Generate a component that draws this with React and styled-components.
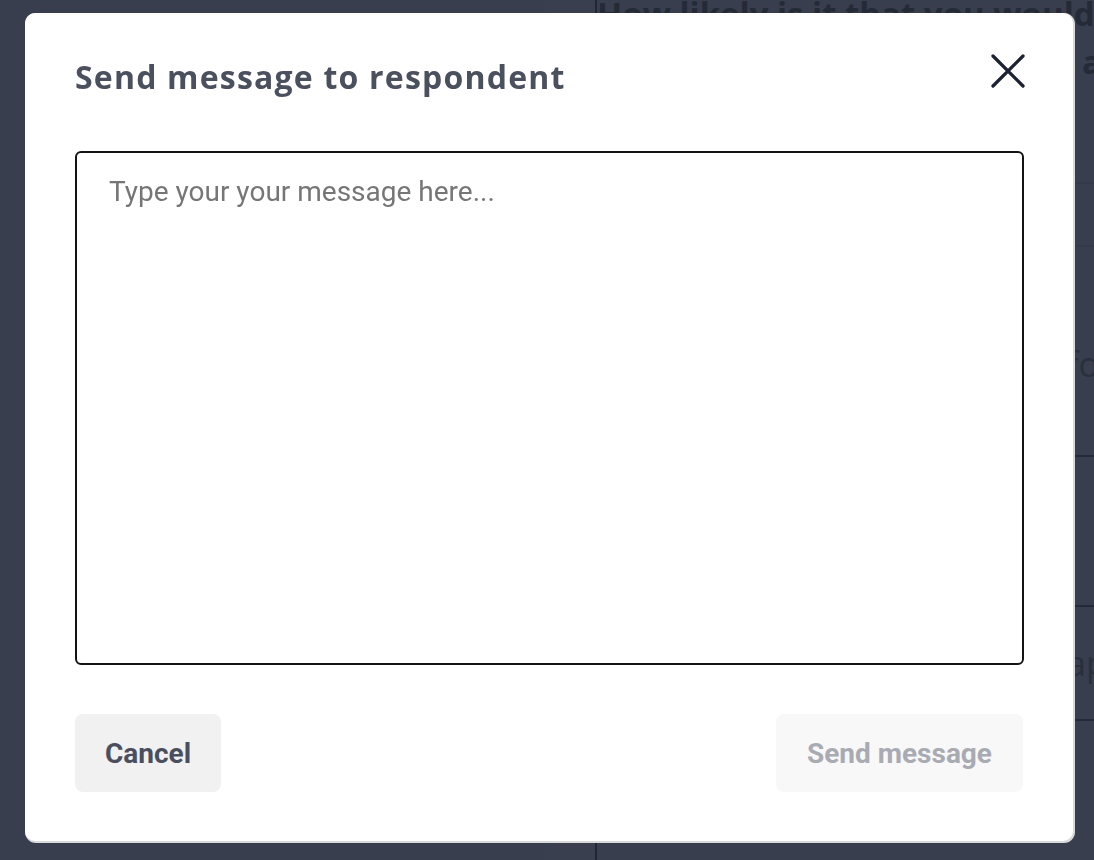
import React from "react";
import styled, { createGlobalStyle } from "styled-components";

const Global = createGlobalStyle`
  html, body { margin: 0; padding: 0; height: 100%; }
  body { background: #383e4e; overflow: hidden; font-family: Roboto, "Liberation Sans", sans-serif; }
  #root { height: 100%; }
`;

const Page = styled.div`
  height: 860px;
  display: grid;
  grid-template-columns: 545px 50px 1fr;
  background: #383e4e;
`;

const SideStrip = styled.div`
  background: #3a3f4f;
`;

const Panel = styled.div`
  border-left: 2px solid #222736;
  display: flex;
  flex-direction: column;
`;

const Question = styled.h2`
  margin: -10px 0 0 0;
  padding: 0;
  font-family: "Open Sans", "Liberation Sans", sans-serif;
  font-weight: 700;
  font-size: 33px;
  line-height: 48px;
  color: #252a37;
  white-space: nowrap;
`;

const Row = styled.div`
  box-sizing: border-box;
  height: ${(p) => p.h}px;
  border-bottom: 2px solid ${(p) => (p.faint ? "#343a49" : "#252a38")};
  display: flex;
  align-items: center;
  padding: ${(p) => p.pt || 0}px 0 0 470px;
  font-family: "Open Sans", "Liberation Sans", sans-serif;
  font-size: 34px;
  color: #2a2f3c;
`;

const Overlay = styled.div`
  position: fixed;
  inset: 0;
  display: flex;
  align-items: flex-start;
  justify-content: flex-start;
  padding: 13px 0 0 25px;
`;

const Modal = styled.div`
  width: 948px;
  padding: 44px 50px 49px 50px;
  background: #fff;
  border-radius: 10px;
  box-shadow: 1px 1px 0 1px #d9d9dc;
  display: flex;
  flex-direction: column;
`;

const Header = styled.div`
  display: flex;
  justify-content: space-between;
  align-items: flex-start;
  height: 94px;
`;

const Title = styled.h1`
  margin: 0;
  font-family: "Open Sans", "Liberation Sans", sans-serif;
  font-weight: 700;
  font-size: 32px;
  letter-spacing: 1.2px;
  line-height: 40px;
  color: #4b505f;
`;

const CloseButton = styled.button`
  border: 0;
  background: none;
  padding: 0;
  width: 34px;
  height: 34px;
  margin: -3px -2px 0 0;
  cursor: pointer;
  display: flex;
  align-items: center;
  justify-content: center;
`;

const MessageBox = styled.textarea`
  box-sizing: border-box;
  width: 949px;
  height: 514px;
  border: 2px solid #141414;
  border-radius: 6px;
  padding: 21px 32px;
  resize: none;
  outline: none;
  font-family: Roboto, "Liberation Sans", sans-serif;
  font-size: 28px;
  line-height: 36px;
  color: #222;
  &::placeholder { color: #767676; }
`;

const Footer = styled.div`
  display: flex;
  justify-content: space-between;
  margin-top: 49px;
`;

const Button = styled.button`
  height: 78px;
  padding: 0 ${(p) => p.px}px;
  border: 0;
  border-radius: 8px;
  background: ${(p) => (p.disabled ? "#f8f8f8" : "#f1f1f1")};
  color: ${(p) => (p.disabled ? "#a9abb3" : "#4a4f5f")};
  font-family: Roboto, "Liberation Sans", sans-serif;
  font-weight: 700;
  font-size: 28px;
  cursor: ${(p) => (p.disabled ? "default" : "pointer")};
`;

export default function App() {
  return (
    <>
      <Global />
      <Page>
        <div />
        <SideStrip />
        <Panel>
          <Question>
            How likely is it that you would
            <br />
            <span style={{ paddingLeft: 485 }}>a</span>
          </Question>
          <Row h={98} faint />
          <Row h={63} faint />
          <Row h={210} pt={26}>fo</Row>
          <Row h={150} />
          <Row h={114}>ap</Row>
        </Panel>
      </Page>
      <Overlay>
        <Modal role="dialog" aria-label="Send message to respondent">
          <Header>
            <Title>Send message to respondent</Title>
            <CloseButton aria-label="Close">
              <svg width="34" height="34" viewBox="0 0 34 34">
                <path d="M2 2 L32 32 M32 2 L2 32" stroke="#1d2233" strokeWidth="3.3" strokeLinecap="round" />
              </svg>
            </CloseButton>
          </Header>
          <MessageBox placeholder="Type your your message here..." />
          <Footer>
            <Button px={30}>Cancel</Button>
            <Button px={31} disabled>Send message</Button>
          </Footer>
        </Modal>
      </Overlay>
    </>
  );
}
